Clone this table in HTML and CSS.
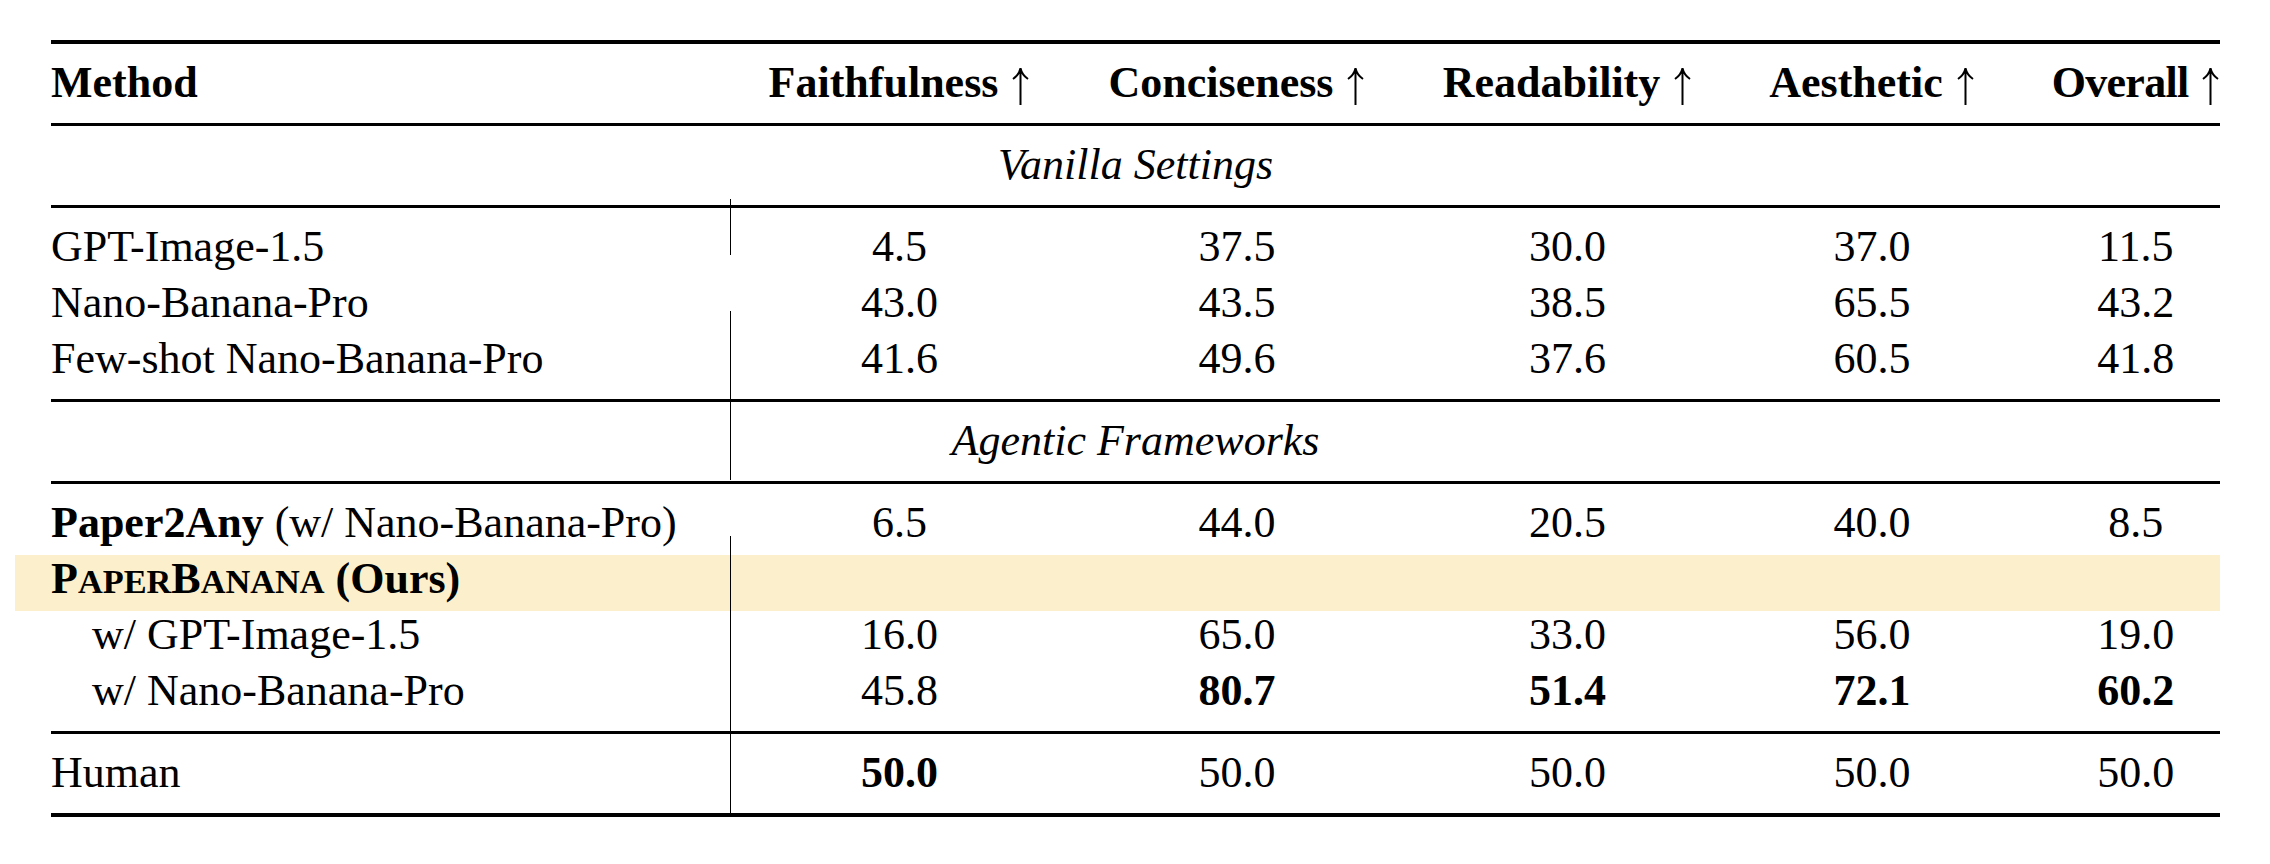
FILE: index.html
```html
<!DOCTYPE html>
<html lang="en">
<head>
<meta charset="utf-8">
<title>Results table</title>
<link rel="stylesheet" href="styles.css">
</head>
<body>
<div class="table">
  <div class="rule heavy"></div>
  <div class="group head-group">
    <div class="row head">
      <div class="cell method">Method</div>
      <div class="cell num">Faithfulness <svg class="arrow" viewBox="0 0 19 38" aria-label="higher is better"><path d="M9.5 2 V38 M2 12 C5.5 9.5 8.5 6 9.5 1.2 C10.5 6 13.5 9.5 17 12"/></svg></div>
      <div class="cell num">Conciseness <svg class="arrow" viewBox="0 0 19 38" aria-label="higher is better"><path d="M9.5 2 V38 M2 12 C5.5 9.5 8.5 6 9.5 1.2 C10.5 6 13.5 9.5 17 12"/></svg></div>
      <div class="cell num">Readability <svg class="arrow" viewBox="0 0 19 38" aria-label="higher is better"><path d="M9.5 2 V38 M2 12 C5.5 9.5 8.5 6 9.5 1.2 C10.5 6 13.5 9.5 17 12"/></svg></div>
      <div class="cell num">Aesthetic <svg class="arrow" viewBox="0 0 19 38" aria-label="higher is better"><path d="M9.5 2 V38 M2 12 C5.5 9.5 8.5 6 9.5 1.2 C10.5 6 13.5 9.5 17 12"/></svg></div>
      <div class="cell num last tight">Overall <svg class="arrow" viewBox="0 0 19 38" aria-label="higher is better"><path d="M9.5 2 V38 M2 12 C5.5 9.5 8.5 6 9.5 1.2 C10.5 6 13.5 9.5 17 12"/></svg></div>
    </div>
  </div>
  <div class="rule"></div>
  <div class="group">
    <div class="row spanrow"><div class="cell span">Vanilla Settings</div></div>
  </div>
  <div class="rule"></div>
  <div class="group">
    <div class="row">
      <div class="cell method">GPT-Image-1.5</div>
      <div class="cell num">4.5</div><div class="cell num">37.5</div><div class="cell num">30.0</div><div class="cell num">37.0</div><div class="cell num last">11.5</div>
    </div>
    <div class="row">
      <div class="cell method">Nano-Banana-Pro</div>
      <div class="cell num">43.0</div><div class="cell num">43.5</div><div class="cell num">38.5</div><div class="cell num">65.5</div><div class="cell num last">43.2</div>
    </div>
    <div class="row">
      <div class="cell method">Few-shot Nano-Banana-Pro</div>
      <div class="cell num">41.6</div><div class="cell num">49.6</div><div class="cell num">37.6</div><div class="cell num">60.5</div><div class="cell num last">41.8</div>
    </div>
  </div>
  <div class="rule"></div>
  <div class="group">
    <div class="row spanrow"><div class="cell span">Agentic Frameworks</div></div>
  </div>
  <div class="rule"></div>
  <div class="group">
    <div class="row">
      <div class="cell method"><b>Paper2Any</b> (w/ Nano-Banana-Pro)</div>
      <div class="cell num">6.5</div><div class="cell num">44.0</div><div class="cell num">20.5</div><div class="cell num">40.0</div><div class="cell num last">8.5</div>
    </div>
    <div class="row highlight">
      <div class="cell method"><b class="sc">P<span>aper</span>B<span>anana</span></b> <b>(Ours)</b></div>
      <div class="cell num"></div><div class="cell num"></div><div class="cell num"></div><div class="cell num"></div><div class="cell num last"></div>
    </div>
    <div class="row">
      <div class="cell method indent">w/ GPT-Image-1.5</div>
      <div class="cell num">16.0</div><div class="cell num">65.0</div><div class="cell num">33.0</div><div class="cell num">56.0</div><div class="cell num last">19.0</div>
    </div>
    <div class="row">
      <div class="cell method indent">w/ Nano-Banana-Pro</div>
      <div class="cell num">45.8</div><div class="cell num"><b>80.7</b></div><div class="cell num"><b>51.4</b></div><div class="cell num"><b>72.1</b></div><div class="cell num last"><b>60.2</b></div>
    </div>
  </div>
  <div class="rule"></div>
  <div class="group">
    <div class="row">
      <div class="cell method">Human</div>
      <div class="cell num"><b>50.0</b></div><div class="cell num">50.0</div><div class="cell num">50.0</div><div class="cell num">50.0</div><div class="cell num last">50.0</div>
    </div>
  </div>
  <div class="rule heavy"></div>
</div>
</body>
</html>
```

FILE: styles.css
```css
html, body {
  margin: 0;
  background: #ffffff;
}

body {
  padding: 40px 0 0 51px;
  font-family: "Liberation Serif", "Times New Roman", serif;
  font-size: 44px;
  color: #000000;
}

.table {
  position: relative;
  width: 2169px;
}

/* the vertical separator after the Method column, with the gaps of the original */
.table::after {
  content: "";
  position: absolute;
  left: 678.5px;
  top: 159px;
  width: 1.5px;
  height: 618px;
  background: linear-gradient(to bottom,
    #000 0, #000 56px,
    transparent 56px, transparent 112.5px,
    #000 112.5px, #000 281.5px,
    transparent 281.5px, transparent 337px,
    #000 337px, #000 100%);
}

.rule {
  height: 2.5px;
  background: #000;
}

.rule.heavy {
  height: 4px;
}

.group {
  padding: 15px 0 8.5px;
}

.head-group {
  padding-bottom: 8px;
}

.row {
  display: grid;
  grid-template-columns: 679px 339px 336px 325px 284px 206px;
  height: 56px;
  line-height: 48px;
}

.cell {
  white-space: nowrap;
}

.num {
  text-align: center;
  padding: 0 37.5px;
}

.num.last {
  padding-right: 0;
}

.head .cell {
  font-weight: bold;
}

.head .tight {
  letter-spacing: -0.7px;
}

.arrow {
  width: 19px;
  height: 38px;
  margin-left: 2px;
  vertical-align: -8px;
  fill: none;
  stroke: #000;
  stroke-width: 2;
}

.spanrow {
  grid-template-columns: 1fr;
}

.span {
  text-align: center;
  font-style: italic;
}

.method.indent {
  padding-left: 41px;
}

.sc span {
  text-transform: uppercase;
  font-size: 0.78em;
}

.highlight {
  background: #fcf0cc;
  margin-left: -36.5px;
  padding-left: 36.5px;
}
```
